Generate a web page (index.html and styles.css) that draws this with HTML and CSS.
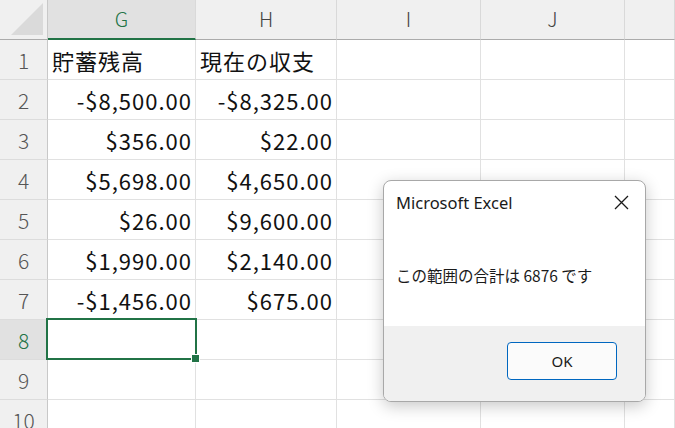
FILE: index.html
```html
<!DOCTYPE html>
<html>
<head>
    <meta charset="UTF-8">
    <link rel="stylesheet" href="styles.css">
</head>
<body>
    <div class="sheet">
        <div class="grid">
            <div class="corner"><div class="corner-tri"></div></div>
            <div class="col-head active">G</div>
            <div class="col-head">H</div>
            <div class="col-head">I</div>
            <div class="col-head">J</div>
            <div class="col-head last"></div>

            <div class="row-head">1</div>
            <div class="cell">貯蓄残高</div>
            <div class="cell">現在の収支</div>
            <div class="cell"></div><div class="cell"></div><div class="cell last"></div>

            <div class="row-head">2</div>
            <div class="cell num">-$8,500.00</div>
            <div class="cell num">-$8,325.00</div>
            <div class="cell"></div><div class="cell"></div><div class="cell last"></div>

            <div class="row-head">3</div>
            <div class="cell num">$356.00</div>
            <div class="cell num">$22.00</div>
            <div class="cell"></div><div class="cell"></div><div class="cell last"></div>

            <div class="row-head">4</div>
            <div class="cell num">$5,698.00</div>
            <div class="cell num">$4,650.00</div>
            <div class="cell"></div><div class="cell"></div><div class="cell last"></div>

            <div class="row-head">5</div>
            <div class="cell num">$26.00</div>
            <div class="cell num">$9,600.00</div>
            <div class="cell"></div><div class="cell"></div><div class="cell last"></div>

            <div class="row-head">6</div>
            <div class="cell num">$1,990.00</div>
            <div class="cell num">$2,140.00</div>
            <div class="cell"></div><div class="cell"></div><div class="cell last"></div>

            <div class="row-head">7</div>
            <div class="cell num">-$1,456.00</div>
            <div class="cell num">$675.00</div>
            <div class="cell"></div><div class="cell"></div><div class="cell last"></div>

            <div class="row-head active">8</div>
            <div class="cell"></div>
            <div class="cell"></div>
            <div class="cell"></div><div class="cell"></div><div class="cell last"></div>

            <div class="row-head">9</div>
            <div class="cell"></div>
            <div class="cell"></div>
            <div class="cell"></div><div class="cell"></div><div class="cell last"></div>

            <div class="row-head">10</div>
            <div class="cell"></div>
            <div class="cell"></div>
            <div class="cell"></div><div class="cell"></div><div class="cell last"></div>
        </div>

        <div class="selection"></div>
        <div class="fill-handle"></div>

        <div class="dialog">
            <div class="dialog-title">
                <span>Microsoft Excel</span>
                <svg class="close" width="15" height="15" viewBox="0 0 15 15">
                    <path d="M1 1 L14 14 M14 1 L1 14" stroke="#1a1a1a" stroke-width="1.3" fill="none"/>
                </svg>
            </div>
            <div class="dialog-body">この範囲の合計は 6876 です</div>
            <div class="dialog-footer">
                <button class="ok">OK</button>
            </div>
        </div>
    </div>
</body>
</html>
```

FILE: styles.css
```css
body {
    margin: 0;
    background: #fff;
    overflow: hidden;
    font-family: "Noto Sans CJK JP", "Noto Sans", sans-serif;
}
.sheet {
    position: relative;
    width: 675px;
    height: 428px;
    overflow: hidden;
}
.grid {
    display: grid;
    grid-template-columns: 48px 148px 141px 144px 144px 1fr;
    grid-template-rows: 40px repeat(10, 40px);
}
.corner {
    background: #f0f0f0;
    border-right: 1px solid #c8c8c8;
    border-bottom: 1px solid #ababab;
    box-sizing: border-box;
    position: relative;
}
.corner-tri {
    position: absolute;
    right: 4px;
    bottom: 4px;
    width: 0;
    height: 0;
    border-left: 32px solid transparent;
    border-bottom: 32px solid #dadada;
}
.col-head {
    background: #f0f0f0;
    border-right: 1px solid #d9d9d9;
    border-bottom: 1px solid #ababab;
    box-sizing: border-box;
    display: flex;
    align-items: center;
    justify-content: center;
    color: #444;
    font-size: 20px;
    font-weight: 300;
    padding-bottom: 2px;
}
.col-head.active {
    background: #e1e1e1;
    color: #217346;
    border-bottom: 2px solid #217346;
    padding-bottom: 1px;
}
.row-head {
    background: #f0f0f0;
    border-right: 1px solid #c8c8c8;
    border-bottom: 1px solid #dcdcdc;
    box-sizing: border-box;
    display: flex;
    align-items: center;
    justify-content: center;
    color: #555;
    font-size: 21px;
    font-weight: 300;
}
.row-head.active {
    background: #e1e1e1;
    color: #217346;
}
.cell {
    border-right: 1px solid #e1e1e1;
    border-bottom: 1px solid #e1e1e1;
    box-sizing: border-box;
    display: flex;
    align-items: center;
    padding: 0 3px 0 4px;
    font-size: 22px;
    letter-spacing: 1px;
    color: #111;
    white-space: nowrap;
    overflow: hidden;
}
.cell.num {
    justify-content: flex-end;
}
.selection {
    position: absolute;
    left: 46px;
    top: 318px;
    width: 151px;
    height: 42px;
    border: 2px solid #217346;
    box-sizing: border-box;
}
.fill-handle {
    position: absolute;
    left: 192px;
    top: 355px;
    width: 7px;
    height: 7px;
    background: #217346;
    outline: 1px solid #fff;
}
.dialog {
    position: absolute;
    left: 383px;
    top: 180px;
    width: 263px;
    height: 222px;
    box-sizing: border-box;
    border: 1px solid #a8a8a8;
    border-radius: 8px;
    background: #fff;
    box-shadow: 0 4px 16px rgba(0, 0, 0, 0.22);
    overflow: hidden;
    display: flex;
    flex-direction: column;
    font-family: "Noto Sans", "Noto Sans CJK JP", sans-serif;
    color: #1a1a1a;
}
.dialog-title {
    display: flex;
    align-items: center;
    justify-content: space-between;
    padding: 0 16px 0 12px;
    height: 42px;
    box-sizing: border-box;
    font-size: 16.5px;
}
.close {
    display: block;
}
.dialog-body {
    flex: 1;
    display: flex;
    align-items: center;
    padding: 0 12px;
    font-size: 15.5px;
    font-family: "Noto Sans CJK JP", sans-serif;
}
.dialog-footer {
    height: 75px;
    background: #f0f0f0;
    display: flex;
    justify-content: flex-end;
    align-items: flex-start;
    padding: 16px 28px 0 0;
    box-sizing: border-box;
}
.ok {
    width: 110px;
    height: 38px;
    background: #fbfbfb;
    border: 1px solid #0067c0;
    border-radius: 4px;
    font-family: "Noto Sans", sans-serif;
    font-size: 15px;
    color: #1a1a1a;
    padding: 0;
}
```
